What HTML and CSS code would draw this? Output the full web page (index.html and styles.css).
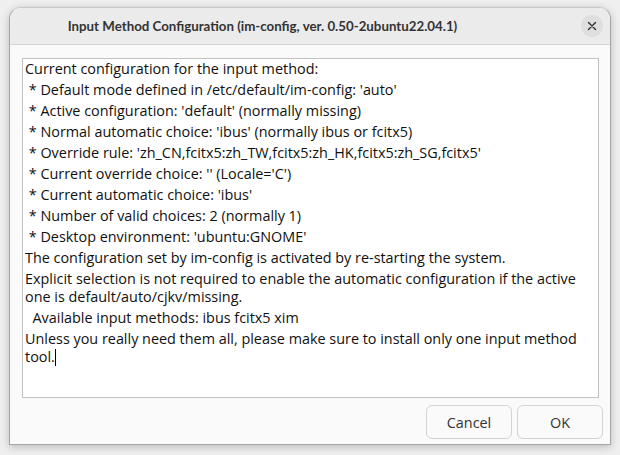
FILE: index.html
```html
<!DOCTYPE html>
<html>
<head>
<meta charset="utf-8">
<link rel="stylesheet" href="styles.css">
</head>
<body>
<div class="window">
  <div class="titlebar">
    <div class="title">Input Method Configuration (im-config, ver. 0.50-2ubuntu22.04.1)</div>
    <div class="close"><svg width="10" height="10" viewBox="0 0 10 10"><path d="M1.5 1.5 L8.5 8.5 M8.5 1.5 L1.5 8.5" stroke="#2e2e2e" stroke-width="1.4" stroke-linecap="round"/></svg></div>
  </div>
  <div class="content">
    <div class="textview">
<p>Current configuration for the input method:</p>
<p> * Default mode defined in /etc/default/im-config: 'auto'</p>
<p> * Active configuration: 'default' (normally missing)</p>
<p> * Normal automatic choice: 'ibus' (normally ibus or fcitx5)</p>
<p> * Override rule: 'zh_CN,fcitx5:zh_TW,fcitx5:zh_HK,fcitx5:zh_SG,fcitx5'</p>
<p> * Current override choice: '' (Locale='C')</p>
<p> * Current automatic choice: 'ibus'</p>
<p> * Number of valid choices: 2 (normally 1)</p>
<p> * Desktop environment: 'ubuntu:GNOME'</p>
<p>The configuration set by im-config is activated by re-starting the system.</p>
<p>Explicit selection is not required to enable the automatic configuration if the active one is default/auto/cjkv/missing.</p>
<p>  Available input methods: ibus fcitx5 xim</p>
<p>Unless you really need them all, please make sure to install only one input method tool.<span class="caret"></span></p>
    </div>
    <div class="actions">
      <button class="btn">Cancel</button>
      <button class="btn">OK</button>
    </div>
  </div>
</div>
</body>
</html>
```
FILE: styles.css
```css
html, body {
  margin: 0;
  padding: 0;
  background: #efefef;
  width: 620px;
  height: 455px;
  overflow: hidden;
}
body {
  padding: 7px 0 0 9px;
  box-sizing: border-box;
  font-family: "Open Sans", "Noto Sans", sans-serif;
}
.window {
  width: 602px;
  height: 438px;
  box-sizing: border-box;
  border: 1px solid #a6a6a6;
  border-top-color: #c8c8c8;
  border-radius: 12px 12px 0 0;
  background: #fafafa;
  box-shadow: 0 2px 8px rgba(0,0,0,0.22);
  display: flex;
  flex-direction: column;
  overflow: hidden;
}
.titlebar {
  height: 37px;
  flex: none;
  box-sizing: border-box;
  background: #ebebeb;
  border-bottom: 1px solid #d4d4d4;
  display: flex;
  align-items: center;
  padding-right: 7px;
}
.title {
  width: 505px;
  text-align: center;
  font-family: "Lato", "Open Sans", sans-serif;
  font-weight: 700;
  font-size: 13.3px;
  color: #333333;
  white-space: nowrap;
}
.close {
  margin-left: auto;
  width: 22px;
  height: 22px;
  border-radius: 50%;
  background: #dedede;
  display: flex;
  align-items: center;
  justify-content: center;
}
.close svg { display: block; }
.content {
  flex: 1;
  display: flex;
  flex-direction: column;
  padding: 13px 11px 7px 12px;
}
.textview {
  height: 340px;
  box-sizing: border-box;
  background: #ffffff;
  border: 1px solid #c2c2c2;
  padding: 1px 2px;
  font-size: 14.4px;
  line-height: 18px;
  color: #111111;
}
.textview p {
  margin: 0 0 3px 0;
  white-space: pre-wrap;
}
.caret {
  display: inline-block;
  width: 1px;
  height: 17px;
  background: #000;
  vertical-align: -4px;
}
.actions {
  margin-top: 7px;
  margin-right: -4px;
  display: flex;
  justify-content: flex-end;
  gap: 5px;
}
.btn {
  width: 86px;
  height: 34px;
  box-sizing: border-box;
  border: 1px solid #d3d3d3;
  border-radius: 6px;
  background: #fafafa;
  font-family: "Open Sans", "Noto Sans", sans-serif;
  font-size: 14.4px;
  color: #333333;
  padding: 0;
}
```
